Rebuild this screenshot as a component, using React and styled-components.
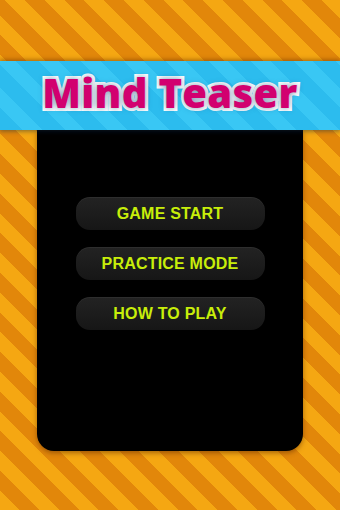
import React from "react";
import styled, { createGlobalStyle } from "styled-components";

const Global = createGlobalStyle`
  html, body { margin: 0; padding: 0; }
  body { width: 340px; height: 510px; overflow: hidden; }
`;

const Screen = styled.div`
  width: 340px;
  height: 510px;
  display: flex;
  flex-direction: column;
  background: repeating-linear-gradient(
    45deg,
    #f5a712 0px,
    #f5a712 14px,
    #e2870a 14px,
    #e2870a 28px
  );
`;

const Banner = styled.header`
  position: relative;
  z-index: 2;
  margin-top: 61px;
  height: 69px;
  display: flex;
  align-items: center;
  justify-content: center;
  background: repeating-linear-gradient(
    45deg,
    #2cbcee 0px,
    #2cbcee 16px,
    #39c7f4 16px,
    #39c7f4 30px
  );
  box-shadow: 0 -2px 4px rgba(120, 60, 0, 0.45), 0 2px 4px rgba(0, 40, 80, 0.35);
`;

const Title = styled.h1`
  margin: 0;
  font-family: "Open Sans", "DejaVu Sans", sans-serif;
  font-weight: 800;
  font-size: 40px;
  line-height: 1;
  letter-spacing: 0.3px;
  color: #d2006f;
  -webkit-text-stroke: 6px #ffffff;
  paint-order: stroke fill;
  text-shadow: 0 0 6px rgba(0, 60, 110, 0.55);
  transform: translateY(-3px);
`;

const Panel = styled.main`
  margin: 0 37px;
  height: 321px;
  background: #000;
  border-radius: 0 0 17px 17px;
  box-shadow: 0 2px 5px rgba(90, 40, 0, 0.5);
  display: flex;
  flex-direction: column;
  align-items: center;
  padding-top: 67px;
  gap: 17px;
  box-sizing: border-box;
`;

const MenuButton = styled.button`
  width: 189px;
  height: 33px;
  border: none;
  border-radius: 14px;
  background: linear-gradient(#232323, #161616);
  box-shadow: inset 0 1px 0 rgba(255, 255, 255, 0.05);
  color: #c8ee0a;
  font-family: "Liberation Sans", Arial, sans-serif;
  font-weight: 700;
  font-size: 16px;
  letter-spacing: 0.2px;
  display: flex;
  align-items: center;
  justify-content: center;
  padding: 0;
  cursor: pointer;
`;

export default function App() {
  return (
    <>
      <Global />
      <Screen>
        <Banner>
          <Title>Mind Teaser</Title>
        </Banner>
        <Panel>
          <MenuButton>GAME START</MenuButton>
          <MenuButton>PRACTICE MODE</MenuButton>
          <MenuButton>HOW TO PLAY</MenuButton>
        </Panel>
      </Screen>
    </>
  );
}
